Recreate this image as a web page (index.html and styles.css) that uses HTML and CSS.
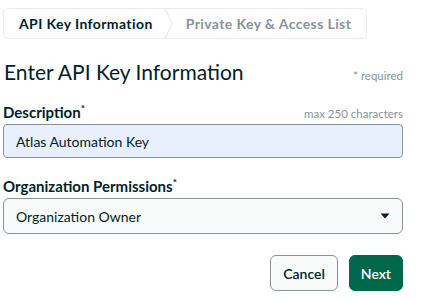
FILE: index.html
```html
<!DOCTYPE html>
<html lang="en">
<head>
    <meta charset="UTF-8">
    <meta name="viewport" content="width=device-width, initial-scale=1.0">
    <title>Create API Key</title>
    <link rel="stylesheet" href="styles.css">
</head>
<body>
    <div class="container">
        <div class="steps">
            <div class="step active">API Key Information</div>
            <svg class="chevron" width="9" height="31" viewBox="0 0 9 31">
                <path d="M1 0 L8 15.5 L1 31" fill="none" stroke="#e1e6e4" stroke-width="1"/>
            </svg>
            <div class="step">Private Key &amp; Access List</div>
        </div>

        <div class="title-row">
            <h1>Enter API Key Information</h1>
            <span class="hint">* required</span>
        </div>

        <div class="field">
            <div class="label-row">
                <label for="description">Description<sup>*</sup></label>
                <span class="hint">max 250 characters</span>
            </div>
            <input type="text" id="description" class="text-input" value="Atlas Automation Key">
        </div>

        <div class="field">
            <div class="label-row">
                <label for="permissions">Organization Permissions<sup>*</sup></label>
            </div>
            <div class="select">
                <span>Organization Owner</span>
                <svg width="10" height="6" viewBox="0 0 10 6">
                    <path d="M0.5 0.5 L9.5 0.5 L5 5.5 Z" fill="#001e2b"/>
                </svg>
            </div>
        </div>

        <div class="actions">
            <button class="btn btn-default">Cancel</button>
            <button class="btn btn-primary">Next</button>
        </div>
    </div>
</body>
</html>
```

FILE: styles.css
```css
* {
    box-sizing: border-box;
    margin: 0;
    padding: 0;
}

body {
    background-color: #fff;
    font-family: 'Lato', sans-serif;
    color: #001e2b;
}

.container {
    width: 400px;
    margin-left: 3px;
    padding-top: 8px;
}

.steps {
    display: inline-flex;
    align-items: center;
    height: 31px;
    border: 1px solid #e8edeb;
    border-radius: 5px;
}

.step {
    font-size: 14px;
    font-weight: 700;
    letter-spacing: 0.4px;
    color: #889397;
    padding: 0 11px 0 15px;
}

.step:last-child {
    padding: 0 15px 0 13px;
}

.step.active {
    color: #001e2b;
}

.chevron {
    display: block;
}

.title-row {
    display: flex;
    justify-content: space-between;
    align-items: baseline;
    margin-top: 20px;
}

h1 {
    font-size: 21px;
    font-weight: 400;
    margin-left: 1px;
}

.hint {
    font-size: 11.5px;
    color: #889397;
}

.field {
    margin-top: 18px;
}

.label-row {
    display: flex;
    justify-content: space-between;
    align-items: baseline;
    margin-bottom: 3px;
}

label {
    font-size: 15px;
    font-weight: 700;
}

sup {
    font-size: 10px;
}

.text-input {
    display: block;
    width: 100%;
    height: 34px;
    padding: 0 12px;
    background-color: #e8f0fe;
    border: 1px solid #889397;
    border-radius: 4px;
    font-family: inherit;
    font-size: 14px;
    color: #001e2b;
}

.select {
    display: flex;
    justify-content: space-between;
    align-items: center;
    height: 36px;
    padding: 0 12px;
    background-color: #f9fbfa;
    border: 1px solid #889397;
    border-radius: 6px;
    font-size: 14px;
}

.actions {
    display: flex;
    justify-content: flex-end;
    gap: 11px;
    margin-top: 21px;
}

.btn {
    height: 36px;
    padding: 0 12px;
    border-radius: 6px;
    font-family: inherit;
    font-size: 14px;
    font-weight: 600;
    cursor: pointer;
}

.btn-default {
    background-color: #f9fbfa;
    border: 1px solid #889397;
    color: #001e2b;
}

.btn-primary {
    padding: 0 11px;
    background-color: #00684a;
    border: 1px solid #00684a;
    color: #fff;
}
```
